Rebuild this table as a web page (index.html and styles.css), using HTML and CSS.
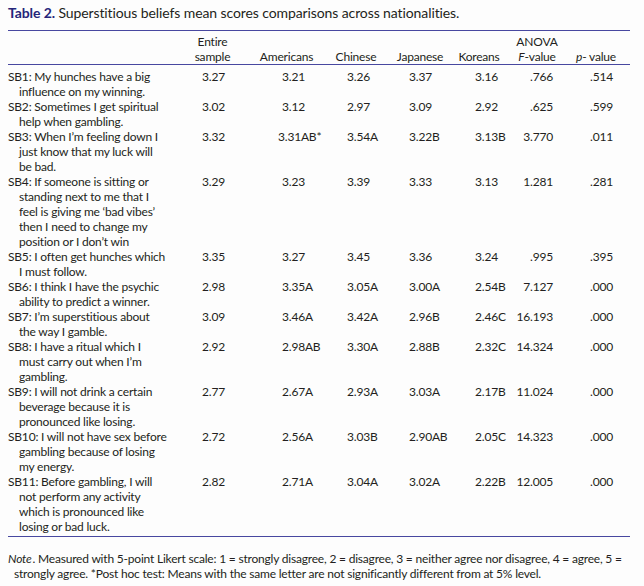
FILE: index.html
```html
<!DOCTYPE html>
<html>
<head>
<meta charset="utf-8">
<link rel="stylesheet" href="styles.css">
</head>
<body>
<div class="wrap">
  <div class="title"><span class="tlabel">Table 2.</span> Superstitious beliefs mean scores comparisons across nationalities.</div>
  <table class="tbl">
    <colgroup>
      <col class="c0"><col class="c1"><col class="c2"><col class="c3"><col class="c4"><col class="c5"><col class="c6"><col class="c7">
    </colgroup>
    <thead>
      <tr>
        <th></th>
        <th>Entire<br>sample</th>
        <th>Americans</th>
        <th>Chinese</th>
        <th>Japanese</th>
        <th>Koreans</th>
        <th>ANOVA<br><i>F</i>-value</th>
        <th><i>p</i>- value</th>
      </tr>
    </thead>
    <tbody>
      <tr><td class="lab">SB1: My hunches have a big influence on my winning.</td><td class="ent">3.27</td><td class="v2">3.21</td><td class="v3">3.26</td><td class="v4">3.37</td><td class="v5">3.16</td><td class="f">.766</td><td class="p">.514</td></tr>
      <tr><td class="lab">SB2: Sometimes I get spiritual help when gambling.</td><td class="ent">3.02</td><td class="v2">3.12</td><td class="v3">2.97</td><td class="v4">3.09</td><td class="v5">2.92</td><td class="f">.625</td><td class="p">.599</td></tr>
      <tr><td class="lab">SB3: When I’m feeling down I just know that my luck will be bad.</td><td class="ent">3.32</td><td class="v2 star">3.31AB*</td><td class="v3">3.54A</td><td class="v4">3.22B</td><td class="v5">3.13B</td><td class="f">3.770</td><td class="p">.011</td></tr>
      <tr><td class="lab">SB4: If someone is sitting or standing next to me that I feel is giving me ‘bad vibes’ then I need to change my position or I don’t win</td><td class="ent">3.29</td><td class="v2">3.23</td><td class="v3">3.39</td><td class="v4">3.33</td><td class="v5">3.13</td><td class="f">1.281</td><td class="p">.281</td></tr>
      <tr><td class="lab">SB5: I often get hunches which I must follow.</td><td class="ent">3.35</td><td class="v2">3.27</td><td class="v3">3.45</td><td class="v4">3.36</td><td class="v5">3.24</td><td class="f">.995</td><td class="p">.395</td></tr>
      <tr><td class="lab">SB6: I think I have the psychic ability to predict a winner.</td><td class="ent">2.98</td><td class="v2">3.35A</td><td class="v3">3.05A</td><td class="v4">3.00A</td><td class="v5">2.54B</td><td class="f">7.127</td><td class="p">.000</td></tr>
      <tr><td class="lab">SB7: I’m superstitious about the way I gamble.</td><td class="ent">3.09</td><td class="v2">3.46A</td><td class="v3">3.42A</td><td class="v4">2.96B</td><td class="v5">2.46C</td><td class="f">16.193</td><td class="p">.000</td></tr>
      <tr><td class="lab">SB8: I have a ritual which I must carry out when I’m gambling.</td><td class="ent">2.92</td><td class="v2">2.98AB</td><td class="v3">3.30A</td><td class="v4">2.88B</td><td class="v5">2.32C</td><td class="f">14.324</td><td class="p">.000</td></tr>
      <tr><td class="lab">SB9: I will not drink a certain beverage because it is pronounced like losing.</td><td class="ent">2.77</td><td class="v2">2.67A</td><td class="v3">2.93A</td><td class="v4">3.03A</td><td class="v5">2.17B</td><td class="f">11.024</td><td class="p">.000</td></tr>
      <tr><td class="lab">SB10: I will not have sex before gambling because of losing my energy.</td><td class="ent">2.72</td><td class="v2">2.56A</td><td class="v3">3.03B</td><td class="v4">2.90AB</td><td class="v5">2.05C</td><td class="f">14.323</td><td class="p">.000</td></tr>
      <tr class="last"><td class="lab">SB11: Before gambling, I will not perform any activity which is pronounced like losing or bad luck.</td><td class="ent">2.82</td><td class="v2">2.71A</td><td class="v3">3.04A</td><td class="v4">3.02A</td><td class="v5">2.22B</td><td class="f">12.005</td><td class="p">.000</td></tr>
    </tbody>
  </table>
  <p class="note"><span class="it">Note</span>. Measured with 5-point Likert scale: 1 = strongly disagree, 2 = disagree, 3 = neither agree nor disagree, 4 = agree, 5 = strongly agree. *Post hoc test: Means with the same letter are not significantly different from at 5% level.</p>
</div>
</body>
</html>
```

FILE: styles.css
```css
html, body {
  margin: 0;
  padding: 0;
  background: #fdfdfd;
}
body {
  font-family: Lato, "Liberation Sans", sans-serif;
  font-size: 12px;
  letter-spacing: -0.2px;
  line-height: 15px;
  color: #231f20;
}
.wrap {
  padding: 5px 14px 0 8px;
}
.title {
  font-size: 14px;
  letter-spacing: -0.1px;
  line-height: 16px;
  height: 25px;
}
.tlabel {
  font-weight: bold;
  color: #25257a;
}
.tbl {
  border-collapse: collapse;
  table-layout: fixed;
  width: 622px;
  border-top: 1px solid #4848a0;
  border-bottom: 1px solid #4848a0;
}
.c0 { width: 162px; }
.c1 { width: 85px; }
.c2 { width: 63px; }
.c3 { width: 76px; }
.c4 { width: 52px; }
.c5 { width: 66px; }
.c6 { width: 50px; }
.c7 { width: 68px; }
thead th {
  font-weight: normal;
  text-align: center;
  vertical-align: bottom;
  padding: 3px 0 0 0;
  border-bottom: 1px solid #4848a0;
  white-space: nowrap;
}
tbody td {
  vertical-align: top;
  padding: 0;
  white-space: nowrap;
}
tbody tr:first-child td {
  padding-top: 4px;
}
tbody tr.last td {
  padding-bottom: 2px;
}
td.lab {
  white-space: normal;
  padding-left: 11px;
  text-indent: -11px;
  padding-right: 2px;
}
td.ent { text-align: center; padding-left: 2px; }
td.v2 { padding-left: 27px; }
td.v2.star { padding-left: 23px; }
td.v3 { padding-left: 29px; }
td.v4 { padding-left: 15px; }
td.v5 { padding-left: 29px; }
td.f { text-align: right; padding-right: 9px; }
td.p { padding-left: 28px; }
.note {
  margin: 14px 0 0 0;
  padding-left: 6px;
  text-indent: -6px;
  width: 624px;
}
.it {
  font-style: italic;
  padding-right: 1px;
}
```
